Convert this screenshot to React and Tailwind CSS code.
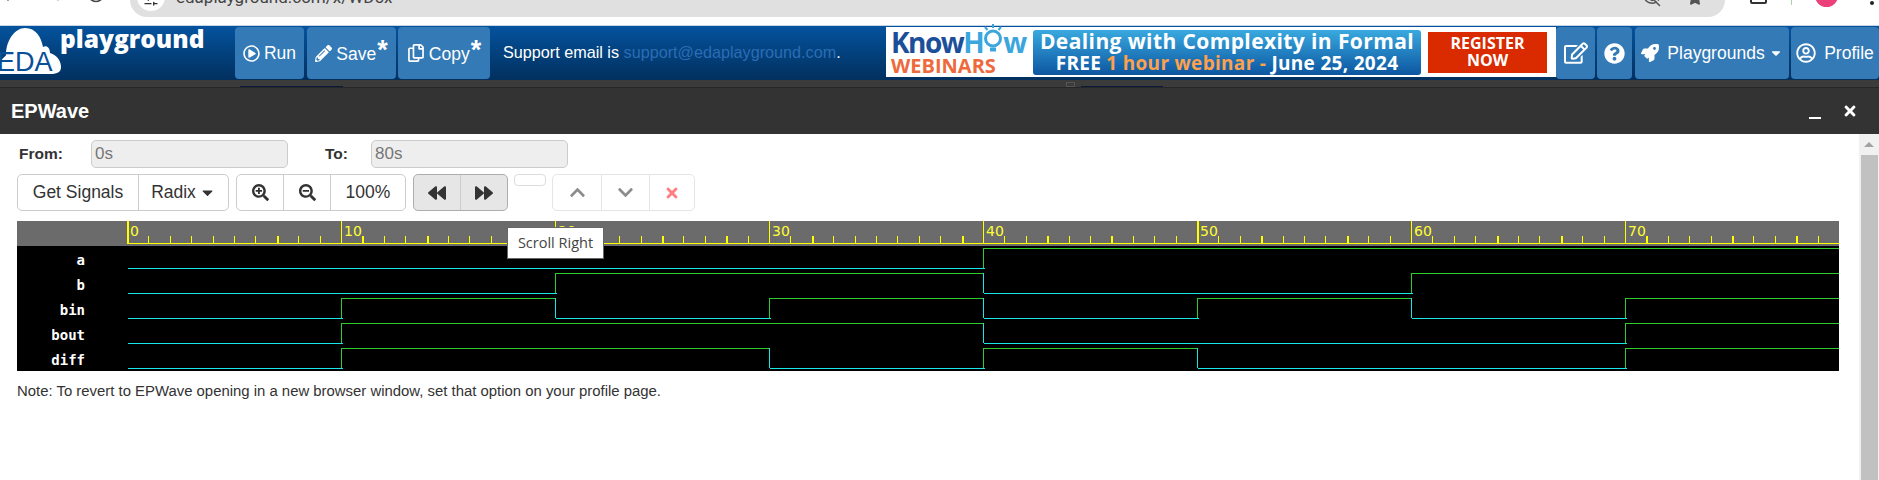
import { ArrowLeft, ArrowRight, RotateCw, EyeOff, Star, SlidersHorizontal } from 'lucide-react';
import {
  FaRegPlayCircle, FaPencilAlt, FaRegCopy, FaRegEdit, FaQuestionCircle, FaRocket, FaRegUserCircle,
  FaSearchPlus, FaSearchMinus, FaBackward, FaForward, FaChevronUp, FaChevronDown, FaTimes, FaCaretDown,
} from 'react-icons/fa';

const PX_PER_UNIT = 21.4;
const ORIGIN = 127;
const xAt = (t) => Math.round(ORIGIN + PX_PER_UNIT * t);

const SIGNALS = [
  { name: 'a', edges: [40] },
  { name: 'b', edges: [20, 40, 60] },
  { name: 'bin', edges: [10, 20, 30, 40, 50, 60, 70] },
  { name: 'bout', edges: [10, 40, 70] },
  { name: 'diff', edges: [10, 30, 40, 50, 70] },
];

const LOW = '#19e6e6';
const HIGH = '#2ecc2e';

function isThick(k) {
  if (k % 7 === 0 && k < 30) return true;
  if (k % 7 === 4 && k >= 11 && k < 70) return true;
  if (k % 7 === 1 && k >= 43) return true;
  return k === 75;
}

function Ruler() {
  const ticks = [];
  for (let k = 1; k < 80; k++) {
    if (k % 10 === 0) continue;
    ticks.push(<rect key={k} x={xAt(k) - 17} y={15} width={isThick(k) ? 2 : 1} height={7} fill="#ffff00" />);
  }
  return (
    <svg width="1822" height="25" className="block bg-[#6b6b6b]" shapeRendering="crispEdges">
      <rect x={xAt(0) - 17} y="22" width="1712" height="1" fill="#ffff00" />
      {ticks}
      {[0, 10, 20, 30, 40, 50, 60, 70].map((t) => (
        <g key={t}>
          <rect x={xAt(t) - 17} y="0" width={t === 0 || t === 50 ? 2 : 1} height="23" fill="#ffff00" />
          <text x={xAt(t) - 17 + 3} y="15" fill="#ffff33" fontSize="14" fontFamily="DejaVu Sans, sans-serif" shapeRendering="auto">{t}</text>
        </g>
      ))}
    </svg>
  );
}

function Wave({ edges, row }) {
  const lowY = 22 + row * 25;
  const highY = lowY - 20;
  const left = 128 - 85;
  const right = 1754;
  const bounds = [left, ...edges.map((t) => xAt(t) - 85 + 1), right];
  const parts = [];
  bounds.slice(0, -1).forEach((x, i) => {
    const high = i % 2 === 1;
    parts.push(<rect key={`h${i}`} x={x} y={high ? highY : lowY} width={bounds[i + 1] - x + (high ? 0 : 1)} height="1" fill={high ? HIGH : LOW} />);
  });
  edges.forEach((t, i) => {
    const rising = i % 2 === 0;
    parts.push(<rect key={`v${i}`} x={xAt(t) - 85} y={highY} width="1" height="20" fill={rising ? HIGH : LOW} />);
  });
  return <g>{parts}</g>;
}

function NavBtn({ children, className }) {
  return (
    <button className={`flex h-[52px] items-center justify-center rounded-[4px] bg-[#337ab7] text-[17.5px] text-white ${className}`}>
      {children}
    </button>
  );
}

function ToolBtn({ children, className }) {
  return (
    <button className={`flex h-full items-center justify-center border-[#ccc] text-[17.5px] text-[#333] ${className}`}>
      {children}
    </button>
  );
}

function Star2() {
  return <sup className="top-[-1px] ml-[1px] text-[27px] font-bold leading-none">*</sup>;
}

function Bulb() {
  return (
    <svg width="20" height="30" viewBox="0 0 20 30" className="mt-[-6px] shrink-0">
      <circle cx="10" cy="14.500" r="7.500" fill="none" stroke="#3ba6dd" strokeWidth="3" />
      <path d="M7 23.500h6v4h-6z" fill="#3ba6dd" />
      <path d="M10 0v4M2 3l2.500 3M18 3l-2.500 3" stroke="#3ba6dd" strokeWidth="2" />
    </svg>
  );
}

export default function App() {
  return (
    <div className="relative h-[480px] w-[1879px] overflow-hidden bg-white font-['Liberation_Sans',Arial,sans-serif] text-[#333]">
      {/* browser chrome, cut off at the top */}
      <div className="flex h-[26px] overflow-hidden border-b border-[#c5d5e5] bg-white">
        <div className="flex w-[130px] items-start text-[#444]">
          <ArrowLeft size={20} strokeWidth={2} className="ml-[-2px] mt-[-16px]" />
          <ArrowRight size={20} strokeWidth={2} className="ml-[30px] mt-[-16px] text-[#aaa]" />
          <RotateCw size={20} strokeWidth={2} className="ml-[18px] mt-[-16px]" />
        </div>
        <div className="flex h-[17px] w-[1595px] items-start rounded-b-[24px] bg-[#e0e0e0]">
          <div className="ml-[7px] mt-[-17px] flex h-[28px] w-[28px] items-center justify-center rounded-full bg-white">
            <SlidersHorizontal size={16} className="mt-[4px] text-[#333]" />
          </div>
          <span className="ml-[11px] mt-[-11px] font-['Roboto',sans-serif] text-[17px] leading-none text-[#444]">edaplayground.com/x/WD5x</span>
          <EyeOff size={18} className="ml-auto mt-[-11px] text-[#555]" />
          <Star size={16} fill="#555" className="ml-[26px] mr-[22px] mt-[-10px] text-[#555]" />
        </div>
        <div className="flex flex-1 items-start">
          <div className="ml-[25px] mt-[-12px] h-[16px] w-[17px] rounded-[2px] border-2 border-[#333]" />
          <div className="ml-[24px] h-[5px] w-px bg-[#a5d6a7]" />
          <div className="ml-[23px] mt-[-16px] h-[23px] w-[23px] rounded-full bg-[#ec407a]" />
          <div className="ml-[32px] mt-[1px] h-[4px] w-[4px] rounded-full bg-[#222]" />
        </div>
      </div>

      {/* site nav */}
      <nav className="flex h-[54px] items-start bg-gradient-to-b from-[#04539e] to-[#02305f] pt-[1px]">
        <div className="flex h-[52px] w-[235px] shrink-0 overflow-hidden">
          <svg width="62" height="52" viewBox="0 0 62 52" className="shrink-0">
            <path d="M-4 47 C-4 34 6 30 6 28 C6 12 16 1 25 1 C36 1 41 10 43 20 C46 18 50 20 50 26 C57 28 61 34 61 40 C61 46 56 47 50 47 Z" fill="#fff" />
            <text x="-3" y="44" fontSize="27" fill="#0a5099" fontFamily="Liberation Sans, sans-serif">EDA</text>
          </svg>
          <span className="ml-[-2px] mt-[-3px] font-['Open_Sans',sans-serif] text-[24.5px] font-extrabold leading-[30px] text-white">playground</span>
        </div>
        <NavBtn className="w-[69px] gap-[4px]"><FaRegPlayCircle size={17} />Run</NavBtn>
        <NavBtn className="ml-[3px] w-[89px] gap-[4px]">
          <FaPencilAlt size={17} />
          <span>Save<Star2 /></span>
        </NavBtn>
        <NavBtn className="ml-[2px] w-[92px] gap-[4px]">
          <FaRegCopy size={18} />
          <span>Copy<Star2 /></span>
        </NavBtn>
        <p className="ml-[13px] mt-[15px] w-[383px] shrink-0 text-[16.2px] leading-[20px] text-white">
          Support email is <a className="text-[#2a6db5]">support@edaplayground.com</a>.
        </p>

        {/* banner */}
        <div className="flex h-[50px] w-[670px] shrink-0 items-center bg-white">
          <div className="ml-[5px] w-[138px] shrink-0 font-['Open_Sans',sans-serif] font-bold">
            <div className="flex h-[26px] items-center text-[28px] leading-none tracking-[-1.500px]">
              <span className="text-[#1c4f9a]">Know</span>
              <span className="text-[#3ba6dd]">H</span>
              <Bulb />
              <span className="text-[#3ba6dd]">w</span>
            </div>
            <div className="mt-[1px] text-[20px] leading-[20px] text-[#ee6a3c]">WEBINARS</div>
          </div>
          <div className="ml-[4px] flex h-[45px] w-[388px] shrink-0 flex-col items-center justify-center rounded-[3px] bg-gradient-to-b from-[#3aa9df] to-[#0d56a0] font-['Open_Sans',sans-serif] font-bold leading-[22px] text-white">
            <div className="text-[21px] tracking-[0.4px]">Dealing with Complexity in Formal</div>
            <div className="text-[19px] tracking-[0.3px]">FREE <span className="text-[#ffa04d]">1 hour webinar -</span> June 25, 2024</div>
          </div>
          <div className="ml-[7px] flex h-[41px] w-[119px] shrink-0 flex-col items-center justify-center bg-[#d92a00] font-['Open_Sans',sans-serif] text-[16px] font-bold leading-[17px] text-white">
            <div>REGISTER</div>
            <div>NOW</div>
          </div>
        </div>

        <NavBtn className="w-[39px]"><FaRegEdit size={24} /></NavBtn>
        <NavBtn className="ml-[2px] w-[35px]"><FaQuestionCircle size={21} /></NavBtn>
        <NavBtn className="ml-[3px] w-[154px] gap-[8px]">
          <FaRocket size={18} />
          <span className="flex items-center gap-[4px]">Playgrounds<FaCaretDown size={14} /></span>
        </NavBtn>
        <NavBtn className="ml-[2px] flex-1 gap-[8px]"><FaRegUserCircle size={20} />Profile</NavBtn>
      </nav>

      {/* strip of the page under the modal */}
      <div className="flex h-[8px] items-end border-b border-[#262626] bg-[#3b3b3b]">
        <div className="ml-[240px] h-px w-[103px] bg-[#0a1a3a]" />
        <div className="ml-[723px] h-[5px] w-[9px] border border-[#555]" />
        <div className="ml-[6px] h-px w-[82px] bg-[#0a1a3a]" />
      </div>

      {/* modal header */}
      <header className="flex h-[46px] items-center bg-[#333] pl-[11px] text-white">
        <h1 className="text-[20px] font-bold">EPWave</h1>
        <div className="ml-auto mt-[13px] h-[2px] w-[12px] bg-white" />
        <FaTimes size={16} className="ml-[21px] mr-[21px] mt-[-1px]" />
      </header>

      <div className="flex">
        <main className="w-[1859px] shrink-0">
          <div className="flex h-[34px] items-center pt-[6px]">
            <label className="ml-[19px] w-[72px] text-[15.500px] font-bold">From:</label>
            <input readOnly value="0s" className="h-[28px] w-[197px] rounded-[5px] border border-[#ccc] bg-[#eee] px-[3px] text-[17px] text-[#777]" />
            <label className="ml-[37px] w-[46px] text-[15.500px] font-bold">To:</label>
            <input readOnly value="80s" className="h-[28px] w-[197px] rounded-[5px] border border-[#ccc] bg-[#eee] px-[3px] text-[17px] text-[#777]" />
          </div>

          <div className="ml-[17px] mt-[6px] flex h-[37px] items-start">
            <div className="flex h-full w-[212px] rounded-[5px] border border-[#ccc]">
              <ToolBtn className="w-[121px] border-r">Get Signals</ToolBtn>
              <ToolBtn className="flex-1 gap-[3px]">Radix<FaCaretDown size={17} /></ToolBtn>
            </div>
            <div className="ml-[7px] flex h-full w-[170px] rounded-[5px] border border-[#ccc]">
              <ToolBtn className="w-[47px] border-r"><FaSearchPlus size={17} /></ToolBtn>
              <ToolBtn className="w-[47px] border-r"><FaSearchMinus size={17} /></ToolBtn>
              <ToolBtn className="flex-1">100%</ToolBtn>
            </div>
            <div className="ml-[7px] flex h-full w-[95px] rounded-[5px] border border-[#adadad] bg-[#e6e6e6]">
              <ToolBtn className="w-[47px] border-r border-[#adadad]"><FaBackward size={18} /></ToolBtn>
              <ToolBtn className="flex-1"><FaForward size={18} /></ToolBtn>
            </div>
            <div className="ml-[6px] h-[12px] w-[32px] rounded-[4px] border border-[#ddd]" />
            <div className="ml-[6px] flex h-full w-[143px] rounded-[5px] border border-[#e5e5e5]">
              <ToolBtn className="w-[49px] border-r border-[#e5e5e5]"><FaChevronUp size={17} color="#8c8c8c" /></ToolBtn>
              <ToolBtn className="w-[48px] border-r border-[#e5e5e5]"><FaChevronDown size={17} color="#8c8c8c" /></ToolBtn>
              <ToolBtn className="flex-1"><FaTimes size={16} color="#ff8080" /></ToolBtn>
            </div>
          </div>

          <div className="ml-[17px] mt-[10px] w-[1822px]">
            <Ruler />
            <div className="flex h-[125px] bg-black">
              <div className="w-[68px] shrink-0 pt-[2px] text-right font-['DejaVu_Sans_Mono',monospace] text-[14px] font-bold leading-[25px] text-white">
                {SIGNALS.map((s) => <div key={s.name}>{s.name}</div>)}
              </div>
              <svg width="1754" height="125" className="block" shapeRendering="crispEdges">
                {SIGNALS.map((s, i) => <Wave key={s.name} edges={s.edges} row={i} />)}
              </svg>
            </div>
          </div>

          <p className="ml-[17px] mt-[11px] text-[14.900px] leading-[18px] text-[#333]">
            Note: To revert to EPWave opening in a new browser window, set that option on your profile page.
          </p>
        </main>

        {/* scrollbar */}
        <div className="h-[346px] w-[20px] bg-[#f1f1f1] pl-[2px]">
          <div className="flex h-[21px] items-center justify-center pr-[2px]">
            <div className="h-0 w-0 border-x-[5px] border-b-[5px] border-x-transparent border-b-[#a3a3a3]" />
          </div>
          <div className="h-full w-[17px] bg-[#c1c1c1]" />
        </div>
      </div>

      {/* tooltip over the ruler */}
      <div className="absolute left-[507px] top-[227px] flex h-[32px] w-[97px] items-center justify-center border border-[#666] bg-white font-['Open_Sans',sans-serif] text-[14.500px] text-[#444]">
        Scroll Right
      </div>
    </div>
  );
}
